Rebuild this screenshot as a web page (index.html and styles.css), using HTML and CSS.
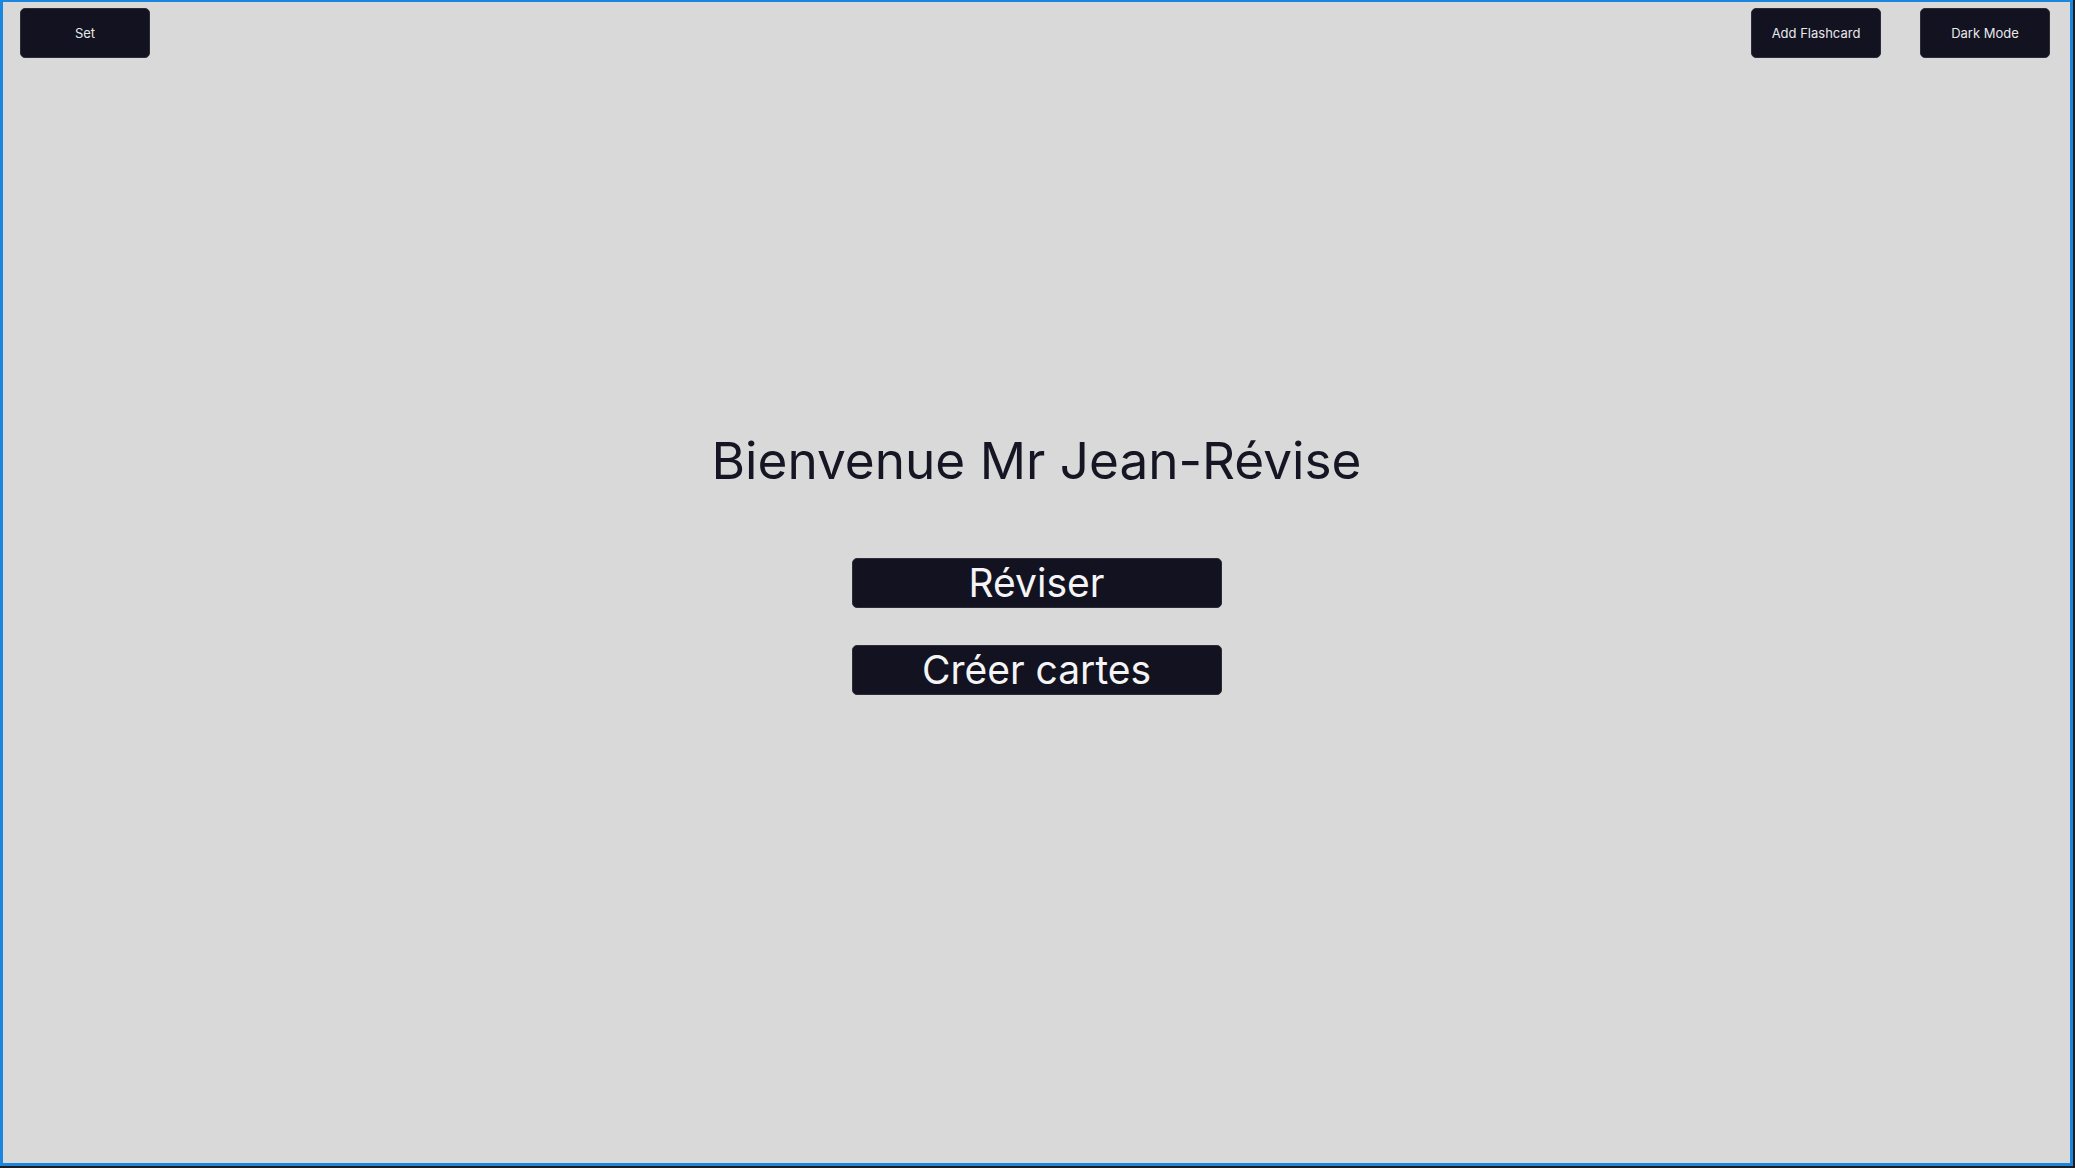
FILE: index.html
```html
<!DOCTYPE html>
<html lang="fr">
<head>
<meta charset="utf-8">
<title>Jean-Révise</title>
<link rel="stylesheet" href="styles.css">
</head>
<body>
<div class="frame">
  <header class="topbar">
    <button class="btn-small">Set</button>
    <div class="topbar-right">
      <button class="btn-small">Add Flashcard</button>
      <button class="btn-small">Dark Mode</button>
    </div>
  </header>
  <main class="home">
    <h1 class="welcome">Bienvenue Mr Jean-Révise</h1>
    <div class="actions">
      <button class="btn-big">Réviser</button>
      <button class="btn-big">Créer cartes</button>
    </div>
  </main>
</div>
</body>
</html>
```

FILE: styles.css
```css
html, body {
  margin: 0;
  padding: 0;
}
html {
  background: #1d1d1f;
}
body {
  font-family: Inter, "Noto Sans", sans-serif;
  overflow: hidden;
}
.frame {
  box-sizing: border-box;
  width: calc(100vw - 2px);
  height: calc(100vh - 2px);
  background: #d9d9d9;
  border-style: solid;
  border-color: #1a86e0;
  border-width: 2px 3px 3px 3px;
  padding: 6px 17px 0 17px;
  display: flex;
  flex-direction: column;
}
.topbar {
  display: flex;
  justify-content: space-between;
  align-items: flex-start;
}
.topbar-right {
  display: flex;
  gap: 39px;
  margin-right: 3px;
}
.btn-small {
  box-sizing: border-box;
  width: 130px;
  height: 50px;
  background: #121220;
  color: #e8e8ec;
  border: 1px solid #2c2c38;
  border-radius: 5px;
  font-family: Inter, "Noto Sans", sans-serif;
  font-size: 13px;
  padding: 0;
}
.home {
  display: flex;
  flex-direction: column;
  align-items: center;
  margin-top: 371px;
}
.welcome {
  margin: 0;
  font-weight: 400;
  font-size: 51.3px;
  line-height: 62px;
  color: #151524;
}
.actions {
  margin-top: 67px;
  display: flex;
  flex-direction: column;
  gap: 37px;
}
.btn-big {
  box-sizing: border-box;
  width: 370px;
  height: 50px;
  background: #121220;
  color: #f4f4f6;
  border: 1px solid #2c2c38;
  border-radius: 5px;
  font-family: Inter, "Noto Sans", sans-serif;
  font-size: 39px;
  line-height: 48px;
  padding: 0;
}
```
